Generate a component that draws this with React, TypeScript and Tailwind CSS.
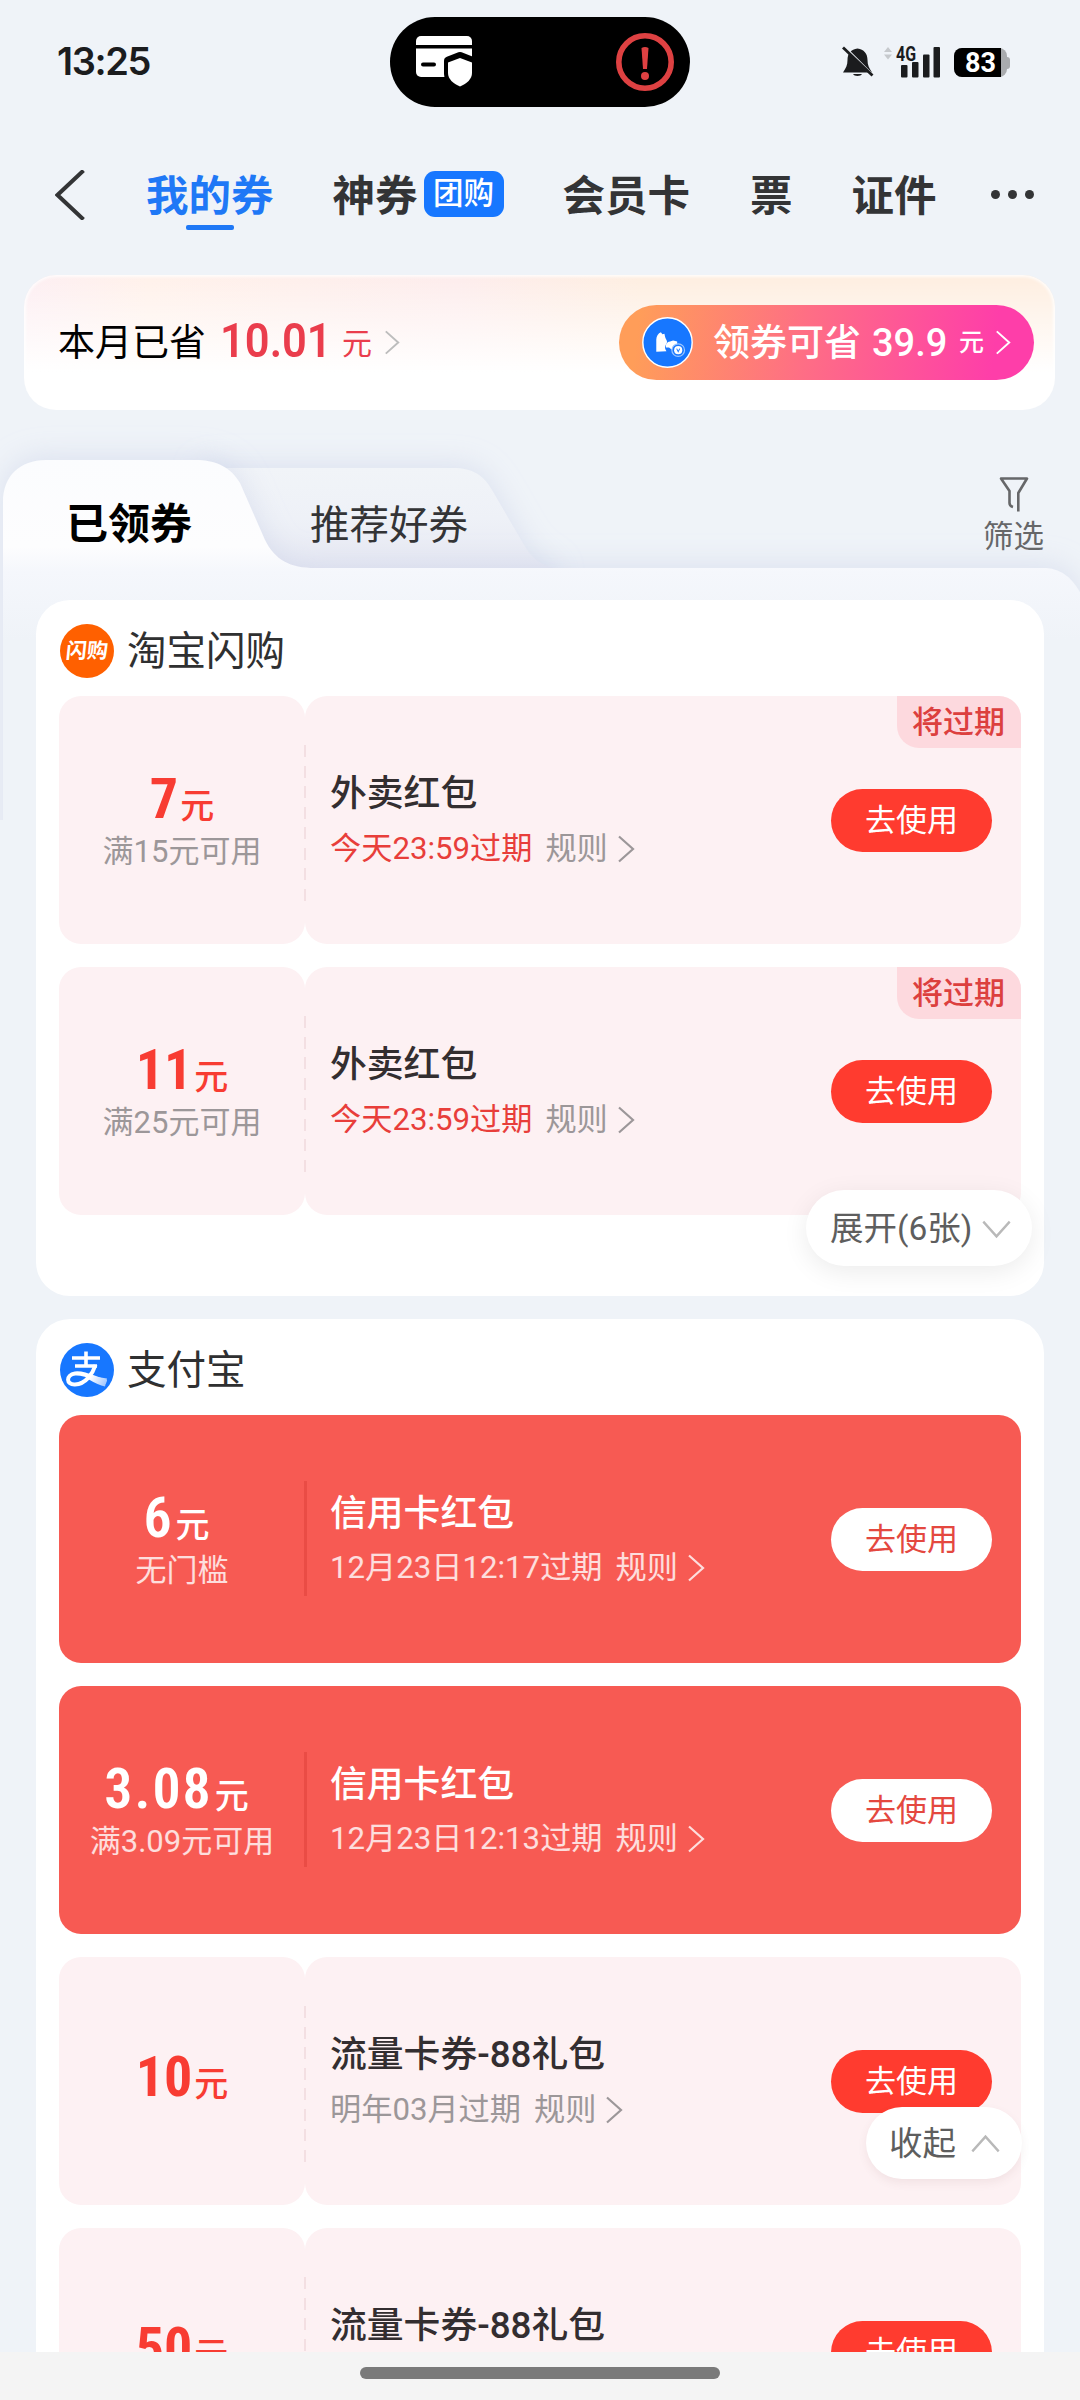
import React from 'react';
import clsx from 'clsx';

type Coupon = {
  amount: string;
  condition?: string;
  title: string;
  expire: string;
  urgent?: boolean;
  tag?: string;
  solid?: boolean;
};

const flashCoupons: Coupon[] = [
  { amount: '7', condition: '满15元可用', title: '外卖红包', expire: '今天23:59过期', urgent: true, tag: '将过期' },
  { amount: '11', condition: '满25元可用', title: '外卖红包', expire: '今天23:59过期', urgent: true, tag: '将过期' },
];

const alipayCoupons: Coupon[] = [
  { amount: '6', condition: '无门槛', title: '信用卡红包', expire: '12月23日12:17过期', solid: true },
  { amount: '3.08', condition: '满3.09元可用', title: '信用卡红包', expire: '12月23日12:13过期', solid: true },
  { amount: '10', title: '流量卡券-88礼包', expire: '明年03月过期' },
  { amount: '50', title: '流量卡券-88礼包', expire: '明年03月过期' },
];

const Chevron: React.FC<{ className?: string; width?: number }> = ({ className, width = 2.2 }) => (
  <svg viewBox="0 0 18 28" fill="none" stroke="currentColor" strokeWidth={width} className={className}>
    <path d="M2 1.5 16 14 2 26.5" />
  </svg>
);

const StatusBar: React.FC = () => (
  <div className="flex h-[107px] shrink-0 items-start pt-[17px]">
    <div className="w-[390px] pl-[57px] pt-[20px] font-['Inter'] text-[38px] font-semibold leading-[48px] tracking-[-1.4px] text-[#1b1c1e]">
      13:25
    </div>
    <div className="flex h-[90px] w-[300px] items-center justify-between rounded-full bg-black pl-[26px] pr-[16px]">
      <svg viewBox="0 0 57 52" className="h-[52px] w-[57px]">
        <path d="M0 9V5a5 5 0 0 1 5-5h46a5 5 0 0 1 5 5v4z" fill="#fff" />
        <path d="M0 12.500h56V36a5 5 0 0 1-5 5H5a5 5 0 0 1-5-5z" fill="#fff" />
        <path d="M7 28.500h11" stroke="#000" strokeWidth="4" strokeLinecap="round" />
        <path
          d="M44 20.500 55.500 25v13c0 6-5 10-11.500 13-6.500-3-11.500-7-11.500-13V25z"
          fill="#fff"
          stroke="#000"
          strokeWidth="9"
          strokeLinejoin="round"
        />
        <path d="M44 22 56 26.500V37c0 6-5 10.500-12 13.500-7-3-12-7.500-12-13.500V26.500z" fill="#fff" />
      </svg>
      <svg viewBox="0 0 58 58" className="h-[58px] w-[58px]" fill="none">
        <circle cx="29" cy="29" r="26.200" stroke="#de4142" strokeWidth="5.600" />
        <path d="M25.500 15q3.500-2 7 0l-1.500 21h-4z" fill="#de4142" />
        <circle cx="29" cy="43" r="4" fill="#de4142" />
      </svg>
    </div>
    <div className="flex items-start pl-[152px] pt-[28px]">
      <svg viewBox="0 0 32 34" className="h-[34px] w-[32px]">
        <path
          d="M15.500 3.500c-6.500 1-10 5-10 11.500 0 5-1.500 8-4.500 12.500h29c-3-4.500-4.500-7.500-4.500-12.500 0-6.500-3.500-10.500-10-11.500zM11 29h9c-1 2.500-8 2.500-9 0z"
          fill="#1b1c1e"
        />
        <path d="m-1 3 31 31" stroke="#eff3f8" strokeWidth="2.500" transform="translate(2 -2.500)" />
        <path d="m1 2.500 29.500 28" stroke="#1b1c1e" strokeWidth="2.800" />
      </svg>
      <svg viewBox="0 0 56 34" className="ml-[10px] h-[34px] w-[56px] overflow-visible">
        <path d="m0 7 4-5 4 5zM0 9.500h8l-4 5z" fill="#c6c9cd" />
        <g fill="#1b1c1e">
          <text x="12" y="15.500" fontSize="20" fontWeight="700" fontFamily="Roboto" textLength="20" lengthAdjust="spacingAndGlyphs">
            4G
          </text>
          <rect x="17" y="20" width="6.500" height="12.500" rx="1" />
          <rect x="28" y="17" width="6.500" height="15.500" rx="1" />
          <rect x="39" y="9.500" width="6.500" height="23" rx="1" />
          <rect x="49.500" y="2" width="6.500" height="30.500" rx="1" />
        </g>
      </svg>
      <div className="ml-[14px] mt-[3px] flex items-center">
        <div className="flex h-[29px] w-[53px] rounded-[8px] bg-[#a9abae]">
          <div className="w-[47px] rounded-l-[8px] bg-black pl-[6px] text-center font-['Roboto'] text-[27px] font-bold leading-[30px] text-white">
            83
          </div>
        </div>
        <div className="h-[12px] w-[3px] rounded-r-[3px] bg-[#a9abae]" />
      </div>
    </div>
  </div>
);

const NavBar: React.FC = () => (
  <div className="flex h-[168px] shrink-0 items-start pt-[60px] text-[42.500px] font-bold leading-[60px] text-[#333436]">
    <svg viewBox="0 0 30 50" className="ml-[55px] mt-[3px] h-[50px] w-[30px]" fill="none" stroke="#333436" strokeWidth="4">
      <path d="M28.500.500 2.500 25l26 24.500" />
    </svg>
    <div className="ml-[61px] flex flex-col items-center text-[#1f78f6]">
      <span>我的券</span>
      <div className="-mt-[2px] h-[5px] w-[48px] rounded-[2px] bg-[#1f78f6]" />
    </div>
    <div className="ml-[59px] flex items-start">
      <span>神券</span>
      <span className="ml-[6px] mt-[4px] h-[46px] w-[80px] rounded-[11px] bg-[#1777ff] text-center text-[30.500px] font-medium leading-[46px] text-white">
        团购
      </span>
    </div>
    <span className="ml-[59px]">会员卡</span>
    <span className="ml-[60px]">票</span>
    <span className="ml-[59px]">证件</span>
    <div className="ml-[54px] flex gap-[8px] pt-[23px]">
      <div className="h-[9px] w-[9px] rounded-full bg-[#333436]" />
      <div className="h-[9px] w-[9px] rounded-full bg-[#333436]" />
      <div className="h-[9px] w-[9px] rounded-full bg-[#333436]" />
    </div>
  </div>
);

const SavingsBanner: React.FC = () => (
  <div className="mx-[24px] flex h-[135px] w-[1031px] shrink-0 items-center justify-between rounded-[32px] bg-[linear-gradient(180deg,rgba(255,255,255,0)_0%,#fff_72%),linear-gradient(90deg,#fdeef2_0%,#fff1ea_12%,#fdecec_42%,#feeee0_60%,#feeee0_100%)] pl-[34px] pr-[21px] shadow-[inset_0_0_3px_2px_rgba(255,255,255,0.8)]">
    <div className="flex items-center">
      <span className="pt-[2px] text-[37px] leading-[60px] text-black">本月已省</span>
      <span className="ml-[14px] inline-block w-[112px] origin-left scale-x-[0.905] whitespace-nowrap pb-[3px] text-[48px] font-semibold leading-[60px] text-[#ea3d4c]">
        10.01
      </span>
      <span className="ml-[10px] pt-[2px] text-[30px] leading-[60px] text-[#ea3d4c]">元</span>
      <Chevron className="ml-[12px] h-[25px] w-[16px] text-[#bdbdbd]" />
    </div>
    <div className="flex h-[75px] w-[415px] items-center rounded-full bg-[linear-gradient(97deg,#ff9d59_5%,#fe6e85_45%,#fe3ea9_90%)] text-white">
      <svg viewBox="0 0 50 50" className="ml-[23px] h-[51px] w-[51px]">
        <circle cx="25" cy="25" r="24.200" fill="#1777ff" stroke="#fff" strokeWidth="1.400" />
        <path
          d="M14 34V22c0-3 2-6 4.500-7l1.500 2 2-.5c.500 2 .500 4 2 6 1 1.500.500 3-.500 4.500-1.500 2.500-1 4.500.500 6.500z"
          fill="#fff"
        />
        <path d="M23.500 30c-.500-3 1-6 4-6l3-1 4 1v6l-4 3-4-3z" fill="#fff" />
        <circle cx="35.500" cy="32.500" r="6.200" fill="#1777ff" stroke="#9cc6ff" strokeWidth="1.200" />
        <circle cx="35.500" cy="32.500" r="4" fill="#fff" />
        <path d="m34 31 1.500 3 1.500-3" stroke="#1777ff" fill="none" />
      </svg>
      <span className="ml-[20px] pt-[2px] text-[37px] font-medium leading-[60px]">领券可省</span>
      <span className="ml-[11px] inline-block w-[77px] whitespace-nowrap text-[38px] font-medium leading-[60px]">39.9</span>
      <span className="ml-[10px] text-[25px] font-medium leading-[60px]">元</span>
      <Chevron className="ml-[11px] h-[25px] w-[16px]" />
    </div>
  </div>
);

const CouponTabs: React.FC = () => (
  <div className="relative flex h-[190px] shrink-0 items-start">
    {/* folder-shaped tab backgrounds */}
    <svg viewBox="0 410 1080 410" className="absolute left-0 top-0 h-[410px] w-[1080px]" fill="none">
      <defs>
        <linearGradient id="tabOn" x1="0" y1="460" x2="0" y2="640" gradientUnits="userSpaceOnUse">
          <stop offset="0" stopColor="#fbfcfe" />
          <stop offset="0.480" stopColor="#fdfdfe" />
          <stop offset="0.620" stopColor="#f5f7fc" />
          <stop offset="1" stopColor="#eff3f8" />
        </linearGradient>
        <linearGradient id="tabOff" x1="0" y1="468" x2="0" y2="568" gradientUnits="userSpaceOnUse">
          <stop offset="0" stopColor="#f1f4f8" />
          <stop offset="0.500" stopColor="#eef1f7" />
          <stop offset="1" stopColor="#e7e9f3" />
        </linearGradient>
        <filter id="tabShadow" x="-100" y="400" width="1300" height="620" filterUnits="userSpaceOnUse">
          <feDropShadow dx="0" dy="-4" stdDeviation="14" floodColor="#b9c3e0" floodOpacity="0.360" />
        </filter>
      </defs>
      <path
        filter="url(#tabShadow)"
        d="M200 468H452C474 468 484 476 492 490L524 545Q536 566 556 568V600H200Z"
        fill="url(#tabOff)"
      />
      <path
        filter="url(#tabShadow)"
        d="M3 960V502C3 476 20 460 46 460H194C218 460 231 468 240 483L265 540C275 560 290 568 315 568H1046Q1070 569 1084 600V960Z"
        fill="url(#tabOn)"
      />
    </svg>
    <span className="relative ml-[66px] mt-[85px] text-[42px] font-bold leading-[60px] text-black">已领券</span>
    <span className="relative ml-[118px] mt-[86px] text-[39.500px] leading-[60px] text-[#333436]">推荐好券</span>
    <div className="relative ml-auto mr-[36px] mt-[67px] flex flex-col items-center text-[#666769]">
      <svg viewBox="0 0 30 35" className="h-[35px] w-[30px]" fill="none" stroke="currentColor" strokeWidth="2.600">
        <path d="M19.300 34.500V16L28 1.500H2L10.500 14v12q0 3 3.500 4" strokeLinejoin="round" />
      </svg>
      <span className="pt-[2px] text-[30.500px] leading-[46px]">筛选</span>
    </div>
  </div>
);

const CouponCard: React.FC<{ coupon: Coupon }> = ({ coupon }) => {
  const { amount, condition, title, expire, urgent, tag, solid } = coupon;
  return (
    <div className={clsx('relative flex h-[248px] shrink-0', solid && 'rounded-[22px] bg-[#f75a53] text-white')}>
      <div
        className={clsx(
          'flex w-[246px] flex-col items-center justify-center',
          condition ? 'pt-[1px]' : 'pb-[1px]',
          !solid && 'rounded-[22px] bg-[#fdf1f3]'
        )}
      >
        <div className={clsx('flex items-baseline leading-[60px]', solid ? 'pr-[11px] text-white' : 'text-[#f83c32]')}>
          <span className={clsx("font-['Roboto'] font-stretch-75% text-[56px]", solid ? 'font-semibold tracking-[2px]' : 'font-bold')}>
            {amount}
          </span>
          <span className="ml-[2px] text-[34px] font-medium">元</span>
        </div>
        {condition && (
          <div className={clsx('-mt-[4px] text-[31px] leading-[40px]', solid ? 'text-white/80' : 'text-[#9c9799]')}>{condition}</div>
        )}
      </div>
      <div
        className={clsx(
          'flex flex-1 items-center justify-between pl-[25px] pr-[29px]',
          !solid && 'rounded-[22px] bg-[#fdf1f3]'
        )}
      >
        <div className="flex flex-col pt-[2px]">
          <div className={clsx('text-[36.800px] font-medium leading-[56px]', solid ? 'pt-[1px] text-white' : 'text-[#332e30]')}>{title}</div>
          <div className={clsx('flex items-center text-[31.200px] leading-[56px]', solid ? '-mt-[2px] text-white/80' : '-mt-[1px] text-[#9c9799]')}>
            <span className={clsx(urgent && 'text-[#e83e3a]')}>{expire}</span>
            <span className="ml-[13px]">规则</span>
            <Chevron className="ml-[9px] h-[28px] w-[18px]" />
          </div>
        </div>
        <button
          className={clsx(
            'h-[63px] w-[161px] rounded-full text-[31px] leading-[64px]',
            solid ? 'bg-white text-[#e4483f]' : 'bg-[#ff3b2f] text-white'
          )}
        >
          去使用
        </button>
      </div>
      {/* divider between amount and details */}
      {solid ? (
        <div className="absolute left-[245px] top-[66px] h-[115px] w-[3px] bg-[#ea4c45]" />
      ) : (
        <div className="absolute left-[245px] top-[49px] h-[156px] w-[2px] bg-[repeating-linear-gradient(180deg,#f3dfe2_0_12px,transparent_12px_20.500px)]" />
      )}
      {tag && (
        <div className="absolute right-0 top-0 h-[52px] w-[124px] rounded-bl-[22px] rounded-tr-[22px] bg-[#fdd9de] pr-[1px] text-center text-[31px] font-medium leading-[53px] text-[#dc403e]">
          {tag}
        </div>
      )}
    </div>
  );
};

const ShopHeader: React.FC<{ name: string; children: React.ReactNode }> = ({ name, children }) => (
  <div className="flex h-[96px] items-center pb-[3px] pl-[1px] pt-[9px]">
    {children}
    <span className="ml-[13px] pt-[2px] text-[39.500px] leading-[60px] text-[#2f3031]">{name}</span>
  </div>
);

export default function App() {
  return (
    <div className="flex h-[2400px] w-[1080px] flex-col overflow-hidden bg-[#eff3f8] font-['Roboto','Noto_Sans_CJK_SC',sans-serif]">
      <div className="flex h-[2352px] shrink-0 flex-col overflow-hidden">
        <StatusBar />
        <NavBar />
        <SavingsBanner />
        <CouponTabs />

        <div className="relative mx-[36px] flex h-[696px] shrink-0 flex-col rounded-[34px] bg-white px-[23px]">
          <ShopHeader name="淘宝闪购">
            <div className="flex h-[54px] w-[54px] items-center justify-center rounded-full bg-[#ff6000]">
              <span className="-skew-x-6 text-[21px] font-bold leading-[30px] text-white">闪购</span>
            </div>
          </ShopHeader>
          <div className="flex flex-col gap-[23px]">
            {flashCoupons.map((coupon) => (
              <CouponCard key={coupon.amount} coupon={coupon} />
            ))}
          </div>
          <div className="absolute right-[12px] top-[590px] flex h-[76px] w-[226px] items-center rounded-full bg-white pl-[24px] pt-[1px] text-[33.500px] leading-[60px] text-[#5e5e5e] shadow-[0_6px_26px_rgba(0,0,0,0.08)]">
            <span>展开(6张)</span>
            <Chevron className="ml-[15px] h-[30px] w-[19px] rotate-90 text-[#b9b9b9]" />
          </div>
        </div>

        <div className="relative mx-[36px] mt-[23px] flex h-[1200px] shrink-0 flex-col rounded-[34px] bg-white px-[23px]">
          <ShopHeader name="支付宝">
            <svg viewBox="0 0 54 54" className="h-[54px] w-[54px]" fill="none">
              <defs>
                <linearGradient id="tail" x1="10" y1="20" x2="48" y2="44" gradientUnits="userSpaceOnUse">
                  <stop offset="0.550" stopColor="#fff" />
                  <stop offset="1" stopColor="#8fbcff" />
                </linearGradient>
              </defs>
              <circle cx="27" cy="27" r="27" fill="#1777ff" />
              <path d="M12 15H40M15 23H37M26 8.500V22" stroke="#fff" strokeWidth="3.600" />
              <path
                d="M35.500 22C33 30 26 41 15 41.500 6 42 5.500 32 15 30.500 23 29.500 32 34 46.500 39"
                stroke="url(#tail)"
                strokeWidth="4"
              />
              <path d="M28 32.500 47 35.500 45 43.500Q38 42 28 36z" fill="url(#tail)" />
            </svg>
          </ShopHeader>
          <div className="flex flex-col gap-[23px]">
            {alipayCoupons.map((coupon) => (
              <CouponCard key={coupon.amount} coupon={coupon} />
            ))}
          </div>
          <div className="absolute right-[22px] top-[788px] flex h-[72px] w-[156px] items-center rounded-full bg-white pl-[23px] pt-[1px] text-[33.500px] leading-[60px] text-[#5e5e5e] shadow-[0_4px_10px_rgba(120,60,70,0.08)]">
            <span>收起</span>
            <Chevron className="ml-[20px] h-[30px] w-[19px] -rotate-90 text-[#b9b9b9]" />
          </div>
        </div>
      </div>

      {/* gesture bar */}
      <div className="flex h-[48px] shrink-0 justify-center bg-[#f4f4f4] pt-[15px]">
        <div className="h-[12px] w-[360px] rounded-full bg-[#7a7a7a]" />
      </div>
    </div>
  );
}
